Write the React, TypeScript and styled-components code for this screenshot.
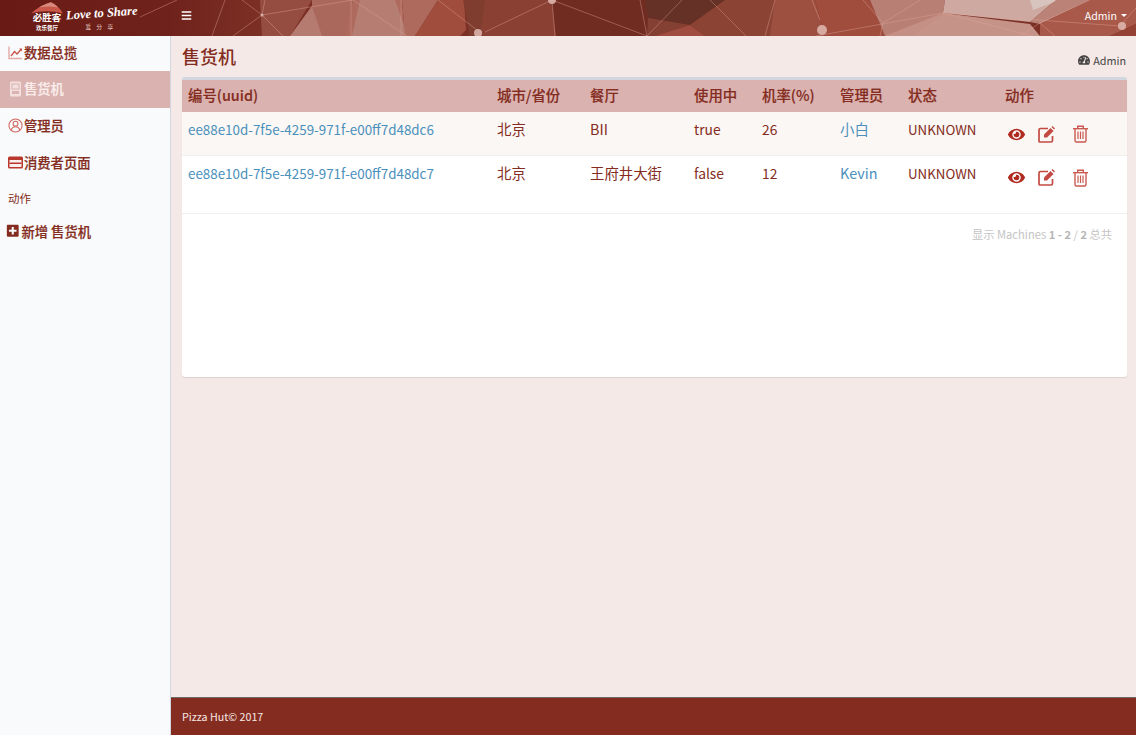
import styled, { createGlobalStyle } from "styled-components";
import { FaBars, FaEye, FaPlusSquare, FaTachometerAlt } from "react-icons/fa";

const GlobalStyle = createGlobalStyle`
  html, body {
    margin: 0;
    height: 100%;
    background: #f4e9e7;
    font-family: "Noto Sans CJK SC", "Noto Sans", sans-serif;
    font-size: 14px;
    color: #842c20;
  }
  * { box-sizing: border-box; }
`;

const Page = styled.div`
  width: 1136px;
  height: 735px;
  display: flex;
  flex-direction: column;
  overflow: hidden;
`;

const Navbar = styled.header`
  position: relative;
  height: 36px;
  flex: none;
  display: flex;
  align-items: center;
  background: linear-gradient(90deg, #691a14 0%, #6f221b 15%, #7c3025 23%);
  overflow: hidden;
  color: #fff;
`;

const Banner = styled.svg`
  position: absolute;
  inset: 0;
  filter: blur(0.6px);
`;

const Brand = styled.div`
  position: relative;
  width: 170px;
  height: 36px;
  flex: none;
  display: flex;
  align-items: flex-start;
  padding-left: 31px;
`;

const BrandMark = styled.div`
  width: 32px;
  padding-top: 2px;
  display: flex;
  flex-direction: column;
  align-items: center;
  font-family: "Liberation Serif", "Noto Sans CJK SC", serif;
  font-weight: 700;
  line-height: 1;
`;

const BrandName = styled.span`
  font-size: 9.5px;
  white-space: nowrap;
`;

const BrandSub = styled.span`
  font-size: 5.5px;
  margin-top: 2px;
  white-space: nowrap;
`;

const Slogan = styled.div`
  margin-left: 3px;
  padding-top: 6px;
  display: flex;
  flex-direction: column;
  align-items: center;
`;

const SloganScript = styled.span`
  font-family: "Liberation Serif", serif;
  font-style: italic;
  font-weight: 700;
  font-size: 12.5px;
  line-height: 15px;
  white-space: nowrap;
  transform: rotate(-4deg);
`;

const SloganSub = styled.span`
  margin-top: 2px;
  font-size: 6px;
  line-height: 7px;
  letter-spacing: 5px;
  color: #e8cdc7;
`;

const MenuToggle = styled.button`
  position: relative;
  background: none;
  border: 0;
  padding: 0;
  margin-left: 11px;
  margin-top: -6px;
  color: #fff;
  display: flex;
  font-size: 11px;
`;

const UserMenu = styled.div`
  position: relative;
  margin-left: auto;
  margin-right: 9px;
  margin-top: -6px;
  font-size: 10.6px;
  color: #fff;
  display: flex;
  align-items: center;
  gap: 4px;
`;

const Caret = styled.i`
  width: 0;
  height: 0;
  border-left: 3px solid transparent;
  border-right: 3px solid transparent;
  border-top: 3px solid #fff;
`;

const Body = styled.div`
  flex: 1;
  display: flex;
  min-height: 0;
`;

const Sidebar = styled.nav`
  width: 171px;
  flex: none;
  background: #f9fafc;
  border-right: 1px solid #d2d6de;
`;

const NavItem = styled.a<{ $active?: boolean; $first?: boolean }>`
  height: ${(p) => (p.$first ? 35 : 37)}px;
  display: flex;
  align-items: center;
  gap: 1px;
  padding-left: 8px;
  padding-bottom: 2px;
  font-size: 13.3px;
  font-weight: 500;
  -webkit-text-stroke: 0.2px currentColor;
  color: ${(p) => (p.$active ? "#fbeeec" : "#842c20")};
  background: ${(p) => (p.$active ? "#dab2b0" : "transparent")};
`;

const NavIconSlot = styled.span`
  width: 15px;
  height: 15px;
  flex: none;
  display: flex;
  align-items: center;
  justify-content: center;
`;

const NavLabel = styled.div`
  height: 34px;
  display: flex;
  align-items: center;
  padding-left: 8px;
  padding-bottom: 2px;
  font-size: 11.5px;
`;

const NewItem = styled(NavItem)`
  gap: 2px;
  padding-left: 6px;
  height: 32px;
  svg { font-size: 13.5px; color: #842c20; }
`;

const Main = styled.main`
  flex: 1;
  display: flex;
  flex-direction: column;
  min-width: 0;
`;

const Content = styled.div`
  flex: 1;
  padding: 0 9px 0 11px;
`;

const TitleRow = styled.div`
  height: 41px;
  display: flex;
  align-items: center;
  justify-content: space-between;
`;

const Title = styled.h1`
  margin: 0 0 1px;
  font-size: 18px;
  font-weight: 500;
  color: #842c20;
`;

const Crumb = styled.span`
  display: flex;
  align-items: center;
  gap: 3px;
  margin-top: 7px;
  margin-right: 1px;
  font-size: 10.8px;
  color: #444;
  svg { font-size: 12px; }
`;

const Card = styled.section`
  height: 300px;
  background: #fff;
  border-top: 3px solid #d2d6de;
  border-radius: 3px;
  box-shadow: 0 1px 1px rgba(0, 0, 0, 0.1);
`;

const Table = styled.table`
  width: 945px;
  table-layout: fixed;
  border-collapse: collapse;
`;

const Th = styled.th<{ $w: number }>`
  width: ${(p) => p.$w}px;
  height: 32px;
  padding: 0 6px 3px;
  background: #dab2b0;
  text-align: left;
  font-size: 14.4px;
  font-weight: 500;
  -webkit-text-stroke: 0.15px currentColor;
  color: #842c20;
`;

const Row = styled.tr<{ $h: number; $odd?: boolean }>`
  height: ${(p) => p.$h}px;
  background: ${(p) => (p.$odd ? "#fbf7f5" : "#fff")};
  border-bottom: 1px solid #f0efee;
`;

const Td = styled.td`
  padding: 7px 6px 0;
  vertical-align: top;
  font-size: 14.4px;
  line-height: 20px;
  color: #842c20;
  white-space: nowrap;
`;

const Latin = styled.span<{ $size?: number }>`
  font-size: ${(p) => p.$size ?? 13.8}px;
`;

const CellLink = styled.a<{ $size?: number }>`
  color: #4a90bb;
  font-size: ${(p) => p.$size ?? 14.4}px;
`;

const Actions = styled.div`
  display: flex;
  align-items: center;
  padding-top: 6px;
  padding-left: 3px;
  color: #b02a20;
`;

const ActionIcon = styled.span<{ $w: number }>`
  width: ${(p) => p.$w}px;
  flex: none;
  display: flex;
  align-items: center;
  font-size: 17px;
`;

const Pager = styled.div`
  margin-top: 12px;
  padding-right: 15px;
  text-align: right;
  font-size: 11.2px;
  line-height: 16px;
  color: #c4c4c4;
  b { font-weight: 700; color: #b5b5b5; }
`;

const Footer = styled.footer`
  height: 38px;
  flex: none;
  display: flex;
  align-items: center;
  padding-left: 11px;
  background: #842c20;
  border-top: 1px solid #6d6a6a;
  color: #f7e9e6;
  font-size: 10.7px;
`;

const ChartIcon = () => (
  <svg width="15" height="15" viewBox="0 0 15 15" fill="none">
    <path d="M1 1.500v12h13" stroke="#e4aaa6" strokeWidth="1.4" />
    <path d="M3 11l3.500-4.500 2.500 2.500L13 4.500" stroke="#c8524a" strokeWidth="1.3" />
    <path d="M11 3.500h3v3z" fill="#c8524a" />
  </svg>
);

const MachineIcon = () => (
  <svg width="13" height="16" viewBox="0 0 13 16">
    <rect x="1" y="0.5" width="11" height="15" rx="1.5" fill="#f3dfdd" />
    <rect x="3" y="3" width="7" height="5" fill="none" stroke="#dab2b0" />
    <rect x="3" y="10" width="7" height="3" fill="#dab2b0" />
  </svg>
);

const PersonIcon = () => (
  <svg width="17" height="17" viewBox="0 0 16 16" fill="none" stroke="#d0655d" strokeWidth="1.1">
    <circle cx="8" cy="8" r="7" />
    <circle cx="8" cy="6" r="2.6" />
    <path d="M3.500 13c.6-2.600 2.300-3.600 4.500-3.600s3.900 1 4.500 3.600" />
  </svg>
);

const CardIcon = () => (
  <svg width="15" height="13" viewBox="0 0 15 13">
    <rect x="0" y="0.5" width="15" height="12" rx="1.5" fill="#b8382c" />
    <rect x="1.5" y="4" width="12" height="7" fill="#fbeeec" />
    <rect x="1.5" y="6.500" width="12" height="1.500" fill="#b8382c" />
  </svg>
);

const EditIcon = () => (
  <svg width="17" height="17" viewBox="0 0 17 17" fill="none">
    <path d="M10 2.500H2.500a1.500 1.500 0 0 0-1.500 1.500V15a1 1 0 0 0 1 1h11a1.500 1.500 0 0 0 1.500-1.500V10" stroke="#c24a42" strokeWidth="1.7" />
    <path d="M6 8.500L12.500 2l3 3L9 11.500H6z" fill="#c24a42" />
    <path d="M13.500 1l1-1 2.500 2.500-1 1z" fill="#c24a42" />
  </svg>
);

const TrashIcon = () => (
  <svg width="15" height="18" viewBox="0 0 15 18" fill="none" stroke="#cb5a50" strokeWidth="1.4">
    <path d="M0 3.700h15" />
    <path d="M4.700 3.500V1.200h5.600v2.300" />
    <path d="M2 4v11.500A1.500 1.500 0 0 0 3.500 17h8a1.500 1.500 0 0 0 1.500-1.500V4" />
    <path d="M5 6.500v7.500M7.500 6.500v7.500M10 6.500v7.500" strokeWidth="1.200" />
  </svg>
);

const polys: [string, string][] = [
  ["260,0 312,0 290,36 262,36", "#964d41"],
  ["312,0 353,0 350,36 320,36 312,6", "#aa685c"],
  ["312,6 322,36 290,36", "#b67b70"],
  ["353,0 402,0 405,36 345,36", "#ad6a5d"],
  ["360,0 395,0 408,36 352,36", "#b67d73"],
  ["402,0 438,0 415,36 405,36", "#ad6a5d"],
  ["438,0 464,0 466,30 460,36 415,36", "#a04d3d"],
  ["463,0 485,0 485,36 470,36", "#7f3d30"],
  ["485,0 552,0 556,36 480,36", "#8a4134"],
  ["552,0 645,0 650,36 556,36", "#712c21"],
  ["645,0 725,0 690,25 648,18", "#653026"],
  ["648,18 690,25 655,36 647,36", "#854034"],
  ["655,36 690,25 705,36", "#a04d3f"],
  ["725,0 775,0 775,36 705,36 690,25", "#8b4333"],
  ["775,0 815,0 825,36 770,36", "#9d5040"],
  ["815,0 870,0 885,36 825,36", "#a04d3e"],
  ["870,0 945,0 943,13 885,36", "#b87f74"],
  ["885,36 943,13 920,36", "#c48f85"],
  ["945,0 1056,0 1030,22 943,13", "#cda9a1"],
  ["1030,0 1060,0 1033,10", "#d8c4bf"],
  ["943,13 1030,24 1040,36 915,36", "#c69389"],
  ["1056,0 1090,0 1040,24 1030,22", "#bb8378"],
  ["1090,0 1136,0 1136,24 1110,36 1040,36 1040,24", "#a9594a"],
  ["1136,24 1136,36 1110,36", "#934234"],
];

const lines = [
  "M140 17L177 0M225 0L212 36M242 0L262 15M262 15L233 36M262 15L283 36M262 15L353 0M265 0L262 15",
  "M353 0L407 36M351 0L351 36M401 0L401 36M438 0L477 30",
  "M485 32L552 0M552 0L555 36M552 0L647 36M640 0L647 36M647 36L682 0M710 0L746 36M775 0L765 36M812 0L820 20",
  "M816 36L943 13M943 13L1120 26M943 13L1033 36M943 13L885 36M943 13L955 0M883 23L863 0M883 23L920 0M883 23L880 36",
  "M1136 8L1120 26M1040 23L1090 0M1040 23L1020 36M1040 23L1055 36",
];

const nodes: [number, number, number][] = [
  [262, 15, 1.5],
  [478, 33, 4],
  [552, 0, 4],
  [822, 30, 5],
  [1122, 26, 4],
];

const tableCols: [string, number][] = [
  ["编号(uuid)", 309],
  ["城市/省份", 93],
  ["餐厅", 104],
  ["使用中", 68],
  ["机率(%)", 78],
  ["管理员", 68],
  ["状态", 97],
  ["动作", 128],
];

const machines = [
  { id: "ee88e10d-7f5e-4259-971f-e00ff7d48dc6", city: "北京", shop: "BII", busy: "true", rate: 26, admin: "小白", h: 43 },
  { id: "ee88e10d-7f5e-4259-971f-e00ff7d48dc7", city: "北京", shop: "王府井大街", busy: "false", rate: 12, admin: "Kevin", h: 58 },
];

export default function App() {
  return (
    <Page>
      <GlobalStyle />
      <Navbar>
        <Banner width="1136" height="36" viewBox="0 0 1136 36">
          {polys.map(([points, fill]) => (
            <polygon key={points} points={points} fill={fill} />
          ))}
          {lines.map((d) => (
            <path key={d} d={d} stroke="#e2a79c" strokeOpacity="0.5" strokeWidth="0.8" fill="none" />
          ))}
          {nodes.map(([cx, cy, r]) => (
            <circle key={cx} cx={cx} cy={cy} r={r} fill="#e0bab2" fillOpacity="0.85" />
          ))}
        </Banner>
        <Brand>
          <BrandMark>
            <svg width="32" height="12" viewBox="0 0 32 12">
              <path d="M0 11.500C5 6.500 12 2.500 20 0c5 2.500 9 6 12 11.500C21 8.500 10 8.500 0 11.500z" fill="#c9584a" />
              <path d="M8 5.500C12 3 16 1.500 20 .5c3 1.500 5 3 7 5-6-1.500-13-1.500-19 0z" fill="#d98a7f" />
            </svg>
            <BrandName>必胜客</BrandName>
            <BrandSub>欢乐餐厅</BrandSub>
          </BrandMark>
          <Slogan>
            <SloganScript>Love to Share</SloganScript>
            <SloganSub>爱分享</SloganSub>
          </Slogan>
        </Brand>
        <MenuToggle aria-label="menu">
          <FaBars />
        </MenuToggle>
        <UserMenu>
          Admin <Caret />
        </UserMenu>
      </Navbar>
      <Body>
        <Sidebar>
          <NavItem $first>
            <NavIconSlot><ChartIcon /></NavIconSlot>数据总揽
          </NavItem>
          <NavItem $active>
            <NavIconSlot><MachineIcon /></NavIconSlot>售货机
          </NavItem>
          <NavItem>
            <NavIconSlot><PersonIcon /></NavIconSlot>管理员
          </NavItem>
          <NavItem>
            <NavIconSlot><CardIcon /></NavIconSlot>消费者页面
          </NavItem>
          <NavLabel>动作</NavLabel>
          <NewItem>
            <FaPlusSquare />新增 售货机
          </NewItem>
        </Sidebar>
        <Main>
          <Content>
            <TitleRow>
              <Title>售货机</Title>
              <Crumb>
                <FaTachometerAlt />Admin
              </Crumb>
            </TitleRow>
            <Card>
              <Table>
                <thead>
                  <tr>
                    {tableCols.map(([label, w]) => (
                      <Th key={label} $w={w}>{label}</Th>
                    ))}
                  </tr>
                </thead>
                <tbody>
                  {machines.map((m, i) => (
                    <Row key={m.id} $h={m.h} $odd={i % 2 === 0}>
                      <Td><CellLink $size={13.4}>{m.id}</CellLink></Td>
                      <Td>{m.city}</Td>
                      <Td>{m.shop}</Td>
                      <Td><Latin>{m.busy}</Latin></Td>
                      <Td><Latin>{m.rate}</Latin></Td>
                      <Td><CellLink>{m.admin}</CellLink></Td>
                      <Td><Latin $size={13.3}>UNKNOWN</Latin></Td>
                      <Td>
                        <Actions>
                          <ActionIcon $w={30}><FaEye /></ActionIcon>
                          <ActionIcon $w={35}><EditIcon /></ActionIcon>
                          <ActionIcon $w={20}><TrashIcon /></ActionIcon>
                        </Actions>
                      </Td>
                    </Row>
                  ))}
                </tbody>
              </Table>
              <Pager>
                显示 Machines <b>1 - 2</b> / <b>2</b> 总共
              </Pager>
            </Card>
          </Content>
          <Footer>Pizza Hut© 2017</Footer>
        </Main>
      </Body>
    </Page>
  );
}
